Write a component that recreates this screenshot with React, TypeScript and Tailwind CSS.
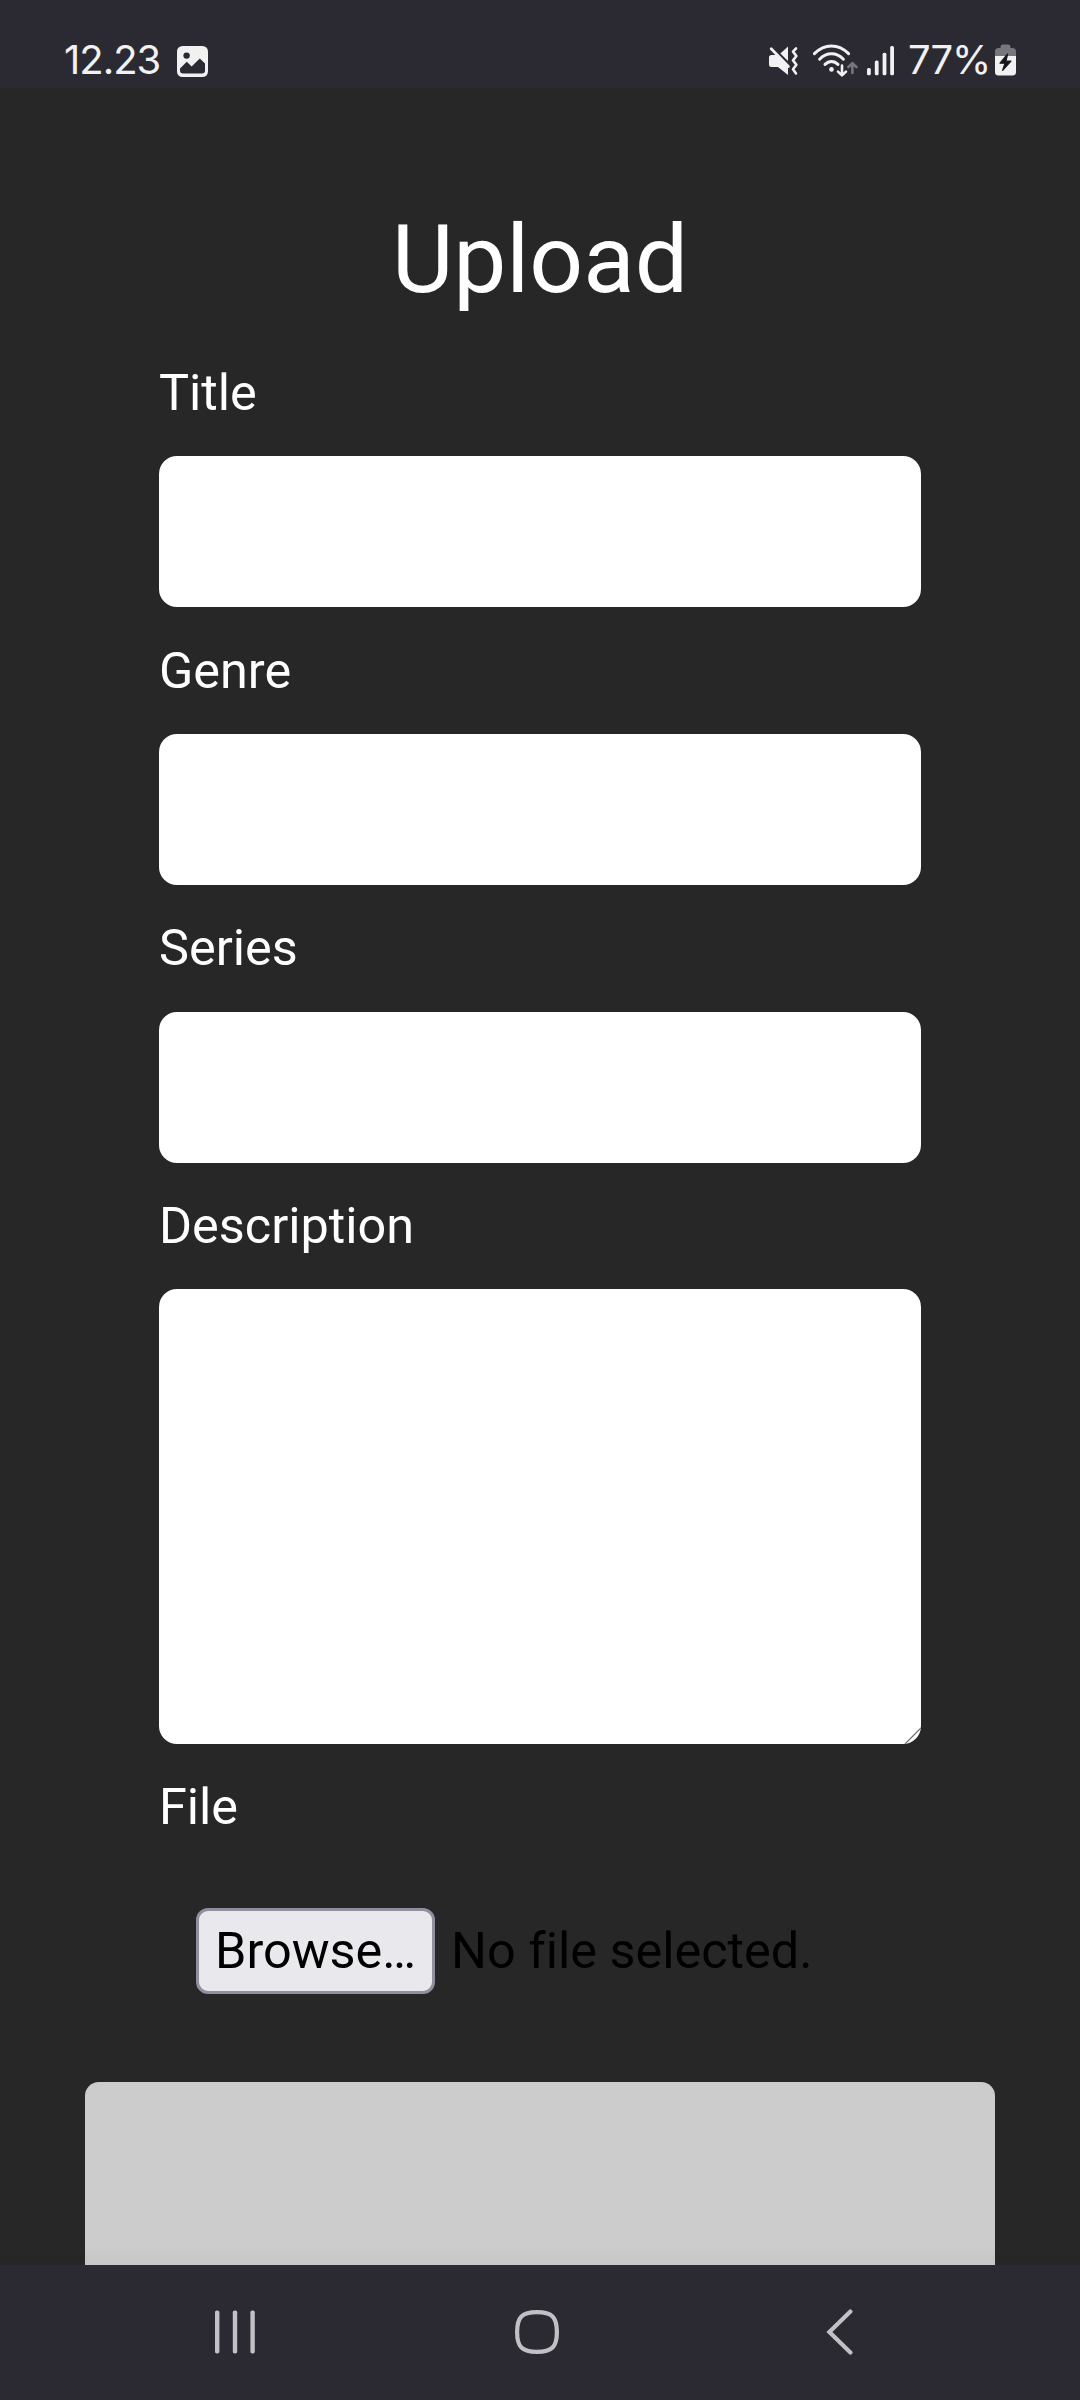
import React from "react";

function PictureIcon() {
  return (
    <svg width="31" height="31" viewBox="0 0 31 31" className="ml-[16px] mt-[46px]">
      <rect width="31" height="31" rx="5.5" fill="#f1f1f2" />
      <circle cx="9.6" cy="9.6" r="3.2" fill="#2b2a33" />
      <path d="M3 22.6 9.8 15.8 14.6 20.4 22.8 12.6 28 17.4V24.4Q28 27.4 25 27.4H6Q3 27.4 3 24.4Z" fill="#2b2a33" />
    </svg>
  );
}

function MuteIcon() {
  return (
    <svg width="32" height="32" viewBox="0 0 32 32" className="mt-[45px]">
      <path d="M3.5 10H8L20 20V30L10 22H3.5Q1 22 1 19.5V12.5Q1 10 3.5 10Z" fill="#f1f1f2" />
      <path d="M12.4 8.4 20 1.5V16Z" fill="#f1f1f2" />
      <path d="M3.2 3.8 20.4 21.4" stroke="#f1f1f2" strokeWidth="2.8" strokeLinecap="round" />
      <path d="M28 3.5 25 6.6 28.4 11 25 15.4 28.4 19.8 25 24.2 28 28.4" fill="none" stroke="#f1f1f2" strokeWidth="2.6" strokeLinecap="round" strokeLinejoin="round" />
    </svg>
  );
}

function WifiIcon() {
  return (
    <svg width="48" height="36" viewBox="0 0 48 36" className="ml-[10px] mt-[42px]" fill="none" strokeLinecap="round">
      <g stroke="#f1f1f2" strokeWidth="3">
        <path d="M4.4 11.6Q12 3.9 21.5 3.9T38.6 11.6" />
        <path d="M9.6 17.2Q14.9 11.8 21.5 11.8T33.4 17.2" />
        <path d="M15 22.4Q18 19.4 21.5 19.4T28 22.4" />
      </g>
      <circle cx="21.5" cy="27.4" r="2.3" fill="#f1f1f2" />
      <path d="M32 23.6V33M28 29.6 32 33.4 36 29.6" stroke="#f1f1f2" strokeWidth="2.6" strokeLinejoin="round" />
      <path d="M42.4 31V21.6M38.4 25 42.4 21.2 46.4 25" stroke="#77767d" strokeWidth="2.6" strokeLinejoin="round" />
    </svg>
  );
}

function SignalIcon() {
  return (
    <svg width="28" height="30" viewBox="0 0 28 30" className="ml-[9px] mt-[46px]" fill="#f1f1f2">
      <rect x="0" y="22" width="3.8" height="7.2" rx="1.5" />
      <rect x="7.8" y="14.4" width="3.8" height="14.8" rx="1.5" />
      <rect x="15.6" y="6.8" width="3.8" height="22.4" rx="1.5" />
      <rect x="23.2" y="0" width="3.8" height="29.2" rx="1.5" />
    </svg>
  );
}

function BatteryIcon() {
  return (
    <svg width="22" height="32" viewBox="0 0 22 32" className="absolute left-[995px] top-[44px]">
      <path d="M0 12V7.6Q0 4 3.6 4H5.5V3Q5.5.6 8 .6H13Q15.5.6 15.5 3V4H17.4Q21 4 21 7.6V12Z" fill="#77767d" />
      <path d="M0 12H21V28Q21 31.6 17.4 31.6H3.6Q0 31.6 0 28Z" fill="#f1f1f2" />
      <path d="M12.6 10 5 19.2H10L7.6 26.4 16 17.2H11Z" fill="#17171b" stroke="#17171b" strokeWidth="1.2" strokeLinejoin="round" />
    </svg>
  );
}

function StatusBar() {
  return (
    <header className="relative flex h-[88px] shrink-0 bg-[#2b2a33] font-['Inter'] text-[40px] font-[370] leading-[48px] text-[#f1f1f2]">
      <div className="ml-[64px] mt-[36px] w-[97px] whitespace-nowrap tracking-[-1px]">12.23</div>
      <PictureIcon />
      <div className="ml-[560px] flex">
        <MuteIcon />
        <WifiIcon />
        <SignalIcon />
      </div>
      <div className="ml-[13px] mt-[36px] whitespace-nowrap tracking-[-1px]">77%</div>
      <BatteryIcon />
    </header>
  );
}

function Label({ children }: { children: React.ReactNode }) {
  return <label className="block h-[60px] whitespace-nowrap text-[50.4px] leading-[60px] text-white">{children}</label>;
}

function Field({ label }: { label: string }) {
  return (
    <div className="mb-[33.35px]">
      <Label>{label}</Label>
      <input className="mt-[33.3px] block h-[151px] w-full rounded-[18px] bg-white px-6 text-[50.4px] text-black outline-none" />
    </div>
  );
}

function ResizeGrip() {
  return (
    <svg width="18" height="18" viewBox="0 0 18 18" className="absolute bottom-0 right-0" fill="none">
      <path d="M2 18 18 2" stroke="#6b6b6b" strokeWidth="1.2" />
      <path d="M8 18 18 8" stroke="#777777" strokeWidth="1" />
      <path d="M12 18 18 12" stroke="#555555" strokeWidth="1" />
    </svg>
  );
}

function NavBar() {
  return (
    <nav className="flex h-[135px] shrink-0 bg-[#2b2a33] pt-[44px]">
      <svg width="42" height="46" viewBox="0 0 42 46" className="ml-[214px]" fill="#c1c0c4">
        <rect x="1" y="1.5" width="4.4" height="43" rx="1.8" />
        <rect x="18.8" y="1.5" width="4.4" height="43" rx="1.8" />
        <rect x="36.4" y="1.5" width="4.4" height="43" rx="1.8" />
      </svg>
      <svg width="46" height="46" viewBox="0 0 46 46" className="ml-[258px]" fill="none">
        <path d="M23 3.1C38 3.1 42.9 8 42.9 23S38 42.9 23 42.9 3.1 38 3.1 23 8 3.1 23 3.1Z" stroke="#c1c0c4" strokeWidth="4.2" />
      </svg>
      <svg width="30" height="48" viewBox="0 0 30 48" className="ml-[264px]" fill="none">
        <path d="M26.4 2.6 5.4 23 26.4 43.6" stroke="#c1c0c4" strokeWidth="4.2" strokeLinecap="round" />
      </svg>
    </nav>
  );
}

export default function App() {
  return (
    <div className="flex h-[2400px] w-[1080px] flex-col overflow-hidden bg-[#272727] font-['Roboto',sans-serif]">
      <StatusBar />
      <main className="relative h-[2177px] shrink-0 overflow-hidden">
        <h1 className="mt-[115px] h-[112px] text-center text-[94.6px] leading-[113px] text-white">Upload</h1>
        <form className="mx-[159px] mt-[48px]">
          <Field label="Title" />
          <Field label="Genre" />
          <Field label="Series" />
          <Label>Description</Label>
          <div className="relative mt-[33.3px] h-[455px] overflow-hidden rounded-[18px] bg-white">
            <ResizeGrip />
          </div>
          <div className="mt-[33px]">
            <Label>File</Label>
          </div>
          <div className="ml-[37px] mt-[71px] flex h-[86px] items-center text-[50.4px] leading-[60px] text-black">
            <button type="button" className="h-[86px] w-[239px] whitespace-nowrap rounded-[12px] border-[3px] border-[#8f8f9d] bg-[#e9e9ed]">
              Browse…
            </button>
            <span className="ml-[16px] whitespace-nowrap [font-variant-ligatures:none]">No file selected.</span>
          </div>
        </form>
        <div className="mx-[85px] mt-[88px] h-[240px] rounded-[14px] bg-[#cccccc]" />
        <div className="absolute inset-x-0 bottom-0 h-[20px] bg-linear-to-b from-black/0 to-black/3" />
      </main>
      <NavBar />
    </div>
  );
}
